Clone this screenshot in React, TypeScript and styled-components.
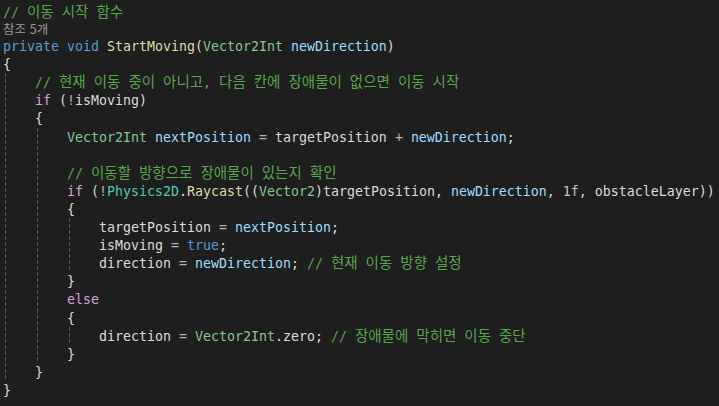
import React from "react";
import styled, { createGlobalStyle } from "styled-components";

const Global = createGlobalStyle`
  html, body { margin: 0; padding: 0; background: #1e1e1e; }
  body { width: 719px; height: 406px; overflow: hidden; }
`;

type Kind = "c" | "k" | "ctl" | "cls" | "st" | "m" | "p" | "f" | "n" | "o" | "pu";

const colors: Record<Kind, string> = {
  c: "#57a64a",
  k: "#569cd6",
  ctl: "#d8a0df",
  cls: "#4ec9b0",
  st: "#86c691",
  m: "#dcdcaa",
  p: "#9cdcfe",
  f: "#dadada",
  n: "#b5cea8",
  o: "#b4b4b4",
  pu: "#dcdcdc",
};

const Editor = styled.div`
  box-sizing: border-box;
  width: 719px;
  height: 406px;
  overflow: hidden;
  background: #1e1e1e;
  padding: 3px 0 0 3px;
  font-family: "DejaVu Sans Mono", "Noto Sans CJK KR", monospace;
  font-size: 13.29px;
  color: #dcdcdc;
`;

const Row = styled.div`
  display: flex;
  height: 18.1px;
  line-height: 18.1px;
  white-space: pre;
`;

const Indent = styled.span`
  flex: none;
  width: 32px;
  height: 100%;
  background-image: repeating-linear-gradient(
    to bottom,
    #5a5a5a 0px,
    #5a5a5a 4px,
    transparent 4px,
    transparent 6px
  );
  background-size: 1px 100%;
  background-position: 2px 0;
  background-repeat: no-repeat;
`;

const Code = styled.span`
  white-space: pre;
  padding-top: 1px;
`;

const Tok = styled.span<{ $k: Kind }>`
  color: ${(p) => colors[p.$k]};
`;

const Hangul = styled.span`
  font-family: "Noto Sans CJK KR", sans-serif;
  font-size: 14.5px;
  line-height: 14px;
`;

const CodeLens = styled.div`
  height: 16px;
  line-height: 16px;
  font-family: "Noto Sans CJK KR", sans-serif;
  font-size: 12.5px;
  word-spacing: 1px;
  color: #999999;
`;

type Line = { indent: number; tokens: [Kind, string][] };

const renderText = (text: string) =>
  text.split(/([\u3131-\uD79D]+)/).map((part, i) =>
    /[\u3131-\uD79D]/.test(part) ? <Hangul key={i}>{part}</Hangul> : part
  );

const lines: Line[] = [
  { indent: 0, tokens: [["k", "private"], ["pu", " "], ["k", "void"], ["pu", " "], ["m", "StartMoving"], ["pu", "("], ["st", "Vector2Int"], ["pu", " "], ["p", "newDirection"], ["pu", ")"]] },
  { indent: 0, tokens: [["pu", "{"]] },
  { indent: 1, tokens: [["c", "// 현재 이동 중이 아니고, 다음 칸에 장애물이 없으면 이동 시작"]] },
  { indent: 1, tokens: [["ctl", "if"], ["pu", " ("], ["o", "!"], ["f", "isMoving"], ["pu", ")"]] },
  { indent: 1, tokens: [["pu", "{"]] },
  { indent: 2, tokens: [["st", "Vector2Int"], ["pu", " "], ["p", "nextPosition"], ["pu", " "], ["o", "="], ["pu", " "], ["f", "targetPosition"], ["pu", " "], ["o", "+"], ["pu", " "], ["p", "newDirection"], ["pu", ";"]] },
  { indent: 2, tokens: [] },
  { indent: 2, tokens: [["c", "// 이동할 방향으로 장애물이 있는지 확인"]] },
  { indent: 2, tokens: [["ctl", "if"], ["pu", " ("], ["o", "!"], ["cls", "Physics2D"], ["pu", "."], ["m", "Raycast"], ["pu", "(("], ["st", "Vector2"], ["pu", ")"], ["f", "targetPosition"], ["pu", ", "], ["p", "newDirection"], ["pu", ", "], ["n", "1f"], ["pu", ", "], ["f", "obstacleLayer"], ["pu", "))"]] },
  { indent: 2, tokens: [["pu", "{"]] },
  { indent: 3, tokens: [["f", "targetPosition"], ["pu", " "], ["o", "="], ["pu", " "], ["p", "nextPosition"], ["pu", ";"]] },
  { indent: 3, tokens: [["f", "isMoving"], ["pu", " "], ["o", "="], ["pu", " "], ["k", "true"], ["pu", ";"]] },
  { indent: 3, tokens: [["f", "direction"], ["pu", " "], ["o", "="], ["pu", " "], ["p", "newDirection"], ["pu", "; "], ["c", "// 현재 이동 방향 설정"]] },
  { indent: 2, tokens: [["pu", "}"]] },
  { indent: 2, tokens: [["ctl", "else"]] },
  { indent: 2, tokens: [["pu", "{"]] },
  { indent: 3, tokens: [["f", "direction"], ["pu", " "], ["o", "="], ["pu", " "], ["st", "Vector2Int"], ["pu", "."], ["f", "zero"], ["pu", "; "], ["c", "// 장애물에 막히면 이동 중단"]] },
  { indent: 2, tokens: [["pu", "}"]] },
  { indent: 1, tokens: [["pu", "}"]] },
  { indent: 0, tokens: [["pu", "}"]] },
];

const CodeRow = ({ line }: { line: Line }) => (
  <Row>
    {Array.from({ length: line.indent }).map((_, i) => (
      <Indent key={i} />
    ))}
    <Code>
      {line.tokens.map(([k, t], i) => (
        <Tok key={i} $k={k}>
          {renderText(t)}
        </Tok>
      ))}
    </Code>
  </Row>
);

export default function App() {
  return (
    <>
      <Global />
      <Editor>
        <CodeRow line={{ indent: 0, tokens: [["c", "// 이동 시작 함수"]] }} />
        <CodeLens>참조 5개</CodeLens>
        {lines.map((l, i) => (
          <CodeRow key={i} line={l} />
        ))}
      </Editor>
    </>
  );
}
